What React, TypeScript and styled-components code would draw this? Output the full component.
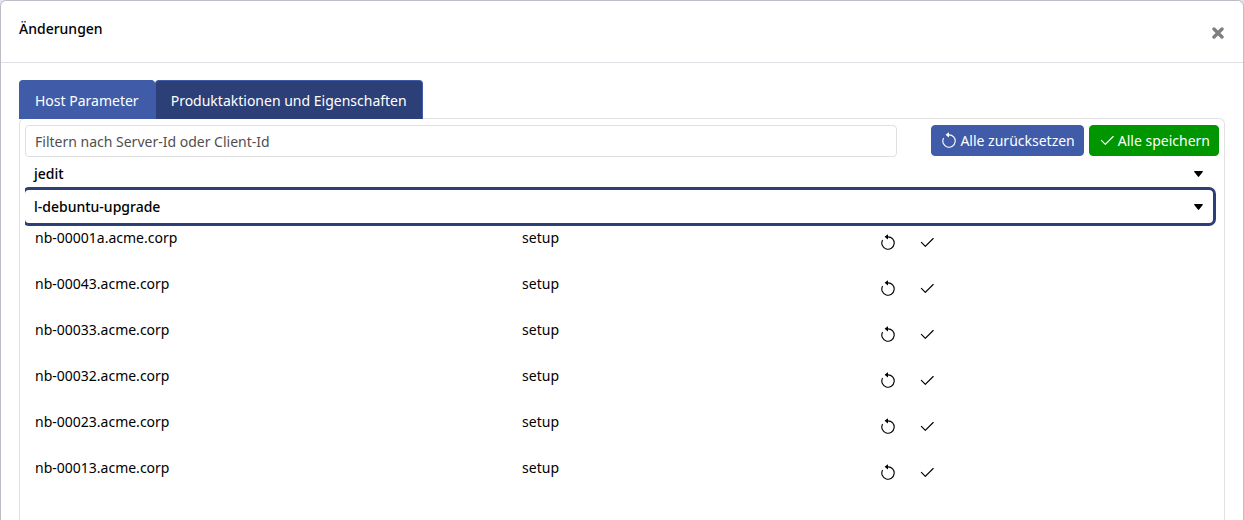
import React from "react";
import styled, { createGlobalStyle } from "styled-components";
import { BsArrowCounterclockwise, BsCheck2 } from "react-icons/bs";

const navy = "#2d3f77";
const blue = "#405ca8";

const GlobalStyle = createGlobalStyle`
  *, *::before, *::after { box-sizing: border-box; }
  body {
    margin: 0;
    background: #e6e6f0;
    color: #000;
    font: 14px/20px "Noto Sans", "Open Sans", sans-serif;
  }
  button, input { font: inherit; }
  button { cursor: pointer; }
`;

const Modal = styled.div`
  display: flex;
  flex-direction: column;
  min-height: 100vh;
  overflow: hidden;
  background: #fff;
  border: 1px solid #bdbdc5;
  border-bottom: 0;
  border-radius: 6px 6px 0 0;
`;

const ModalHeader = styled.header`
  display: flex;
  justify-content: space-between;
  align-items: flex-start;
  height: 62px;
  padding: 18px;
  border-bottom: 1px solid #dee0e6;
`;

const Title = styled.h1`
  margin: 0;
  font-size: 14px;
  font-weight: 500;
`;

const CloseButton = styled.button`
  display: flex;
  padding: 8px 1px;
  border: 0;
  background: none;
  color: #7f7f7f;
`;

const ModalBody = styled.main`
  display: flex;
  flex: 1;
  flex-direction: column;
  padding: 17px 18px 0;
`;

const TabList = styled.div`
  display: flex;
`;

const Tab = styled.button<{ $active?: boolean }>`
  position: relative;
  height: 39px;
  padding: 2px 15px 0;
  margin-bottom: -1px;
  border: 1px solid ${blue};
  border-bottom-width: 0;
  border-radius: 4px 4px 0 0;
  background: ${(p) => (p.$active ? navy : blue)};
  color: #fff;
`;

const Panel = styled.section`
  flex: 1;
  padding: 6px 5px 0;
  border: 1px solid #e2e2e2;
  border-bottom: 0;
  border-radius: 6px 6px 0 0;
`;

const Toolbar = styled.div`
  display: flex;
  align-items: flex-start;
  gap: 5px;
  margin-bottom: 1px;
`;

const FilterInput = styled.input`
  flex: 1;
  min-width: 0;
  height: 32px;
  margin-right: 29px;
  padding: 0 9px;
  border: 1px solid #dfdfe1;
  border-radius: 4px;
  background: #fff;
  color: #000;
  &::placeholder { color: #4f4f4f; opacity: 1; }
`;

const ActionButton = styled.button<{ $color: string }>`
  display: flex;
  align-items: center;
  gap: 2px;
  height: 31px;
  padding: 1px 8px 0;
  border: 1px solid ${(p) => p.$color};
  border-radius: 4px;
  background: ${(p) => p.$color};
  color: #fff;
  white-space: nowrap;
`;

const ProductList = styled.div`
  overflow: hidden;
  padding-right: 6px;
`;

const ProductHeading = styled.h2`
  margin: 0;
  font-size: 14px;
  font-weight: 500;
`;

const ProductToggle = styled.button<{ $focused?: boolean }>`
  display: flex;
  justify-content: space-between;
  align-items: center;
  width: 100%;
  height: ${(p) => (p.$focused ? 33 : 32)}px;
  padding: 0 10px 0 9px;
  border: 0;
  border-radius: 4px;
  background: none;
  color: #000;
  outline: 0;
  box-shadow: ${(p) => (p.$focused ? `0 0 0 3px ${navy}` : "none")};
`;

const ClientTable = styled.table`
  width: 100%;
  table-layout: fixed;
  border-collapse: collapse;
`;

const Cell = styled.td<{ $width: string }>`
  width: ${(p) => p.$width};
  height: 46px;
  padding: 5px 10px;
  vertical-align: top;
`;

const ActionCell = styled(Cell)`
  padding: 5px 4px;
`;

const RowActions = styled.div`
  display: flex;
  gap: 7px;
`;

const IconButton = styled.button`
  display: flex;
  justify-content: center;
  align-items: center;
  width: 32px;
  height: 30px;
  padding: 0;
  border: 0;
  background: none;
  color: #000;
`;

const Caret = () => (
  <svg width="9" height="6" viewBox="0 0 9 6" aria-hidden="true">
    <path d="M.8 0h7.4c.8 0 1 .6.5 1.1L5.1 5.6a.8.8 0 0 1-1.2 0L.3 1.1C-.2.6 0 0 .8 0z" fill="currentColor" />
  </svg>
);

const Cross = () => (
  <svg width="12" height="12" viewBox="0 0 12 12" aria-hidden="true">
    <path d="M2 2l8 8M10 2l-8 8" stroke="currentColor" strokeWidth="3.4" strokeLinecap="round" />
  </svg>
);

const clients = ["nb-00001a", "nb-00043", "nb-00033", "nb-00032", "nb-00023", "nb-00013"];

export default function App() {
  return (
    <>
      <GlobalStyle />
      <Modal role="dialog" aria-labelledby="dialog-title">
        <ModalHeader>
          <Title id="dialog-title">Änderungen</Title>
          <CloseButton type="button" aria-label="Schließen">
            <Cross />
          </CloseButton>
        </ModalHeader>
        <ModalBody>
          <TabList role="tablist">
            <Tab type="button" role="tab" aria-selected={false}>Host Parameter</Tab>
            <Tab type="button" role="tab" aria-selected $active>Produktaktionen und Eigenschaften</Tab>
          </TabList>
          <Panel role="tabpanel">
            <Toolbar>
              <FilterInput
                type="text"
                aria-label="Filtern nach Server-Id oder Client-Id"
                placeholder="Filtern nach Server-Id oder Client-Id"
              />
              <ActionButton type="button" $color={blue}>
                <BsArrowCounterclockwise size={18} />
                Alle zurücksetzen
              </ActionButton>
              <ActionButton type="button" $color="#009600">
                <BsCheck2 size={18} />
                Alle speichern
              </ActionButton>
            </Toolbar>
            <ProductList>
              <ProductHeading>
                <ProductToggle type="button" aria-expanded={false}>
                  jedit
                  <Caret />
                </ProductToggle>
              </ProductHeading>
              <ProductHeading>
                <ProductToggle type="button" aria-expanded $focused>
                  l-debuntu-upgrade
                  <Caret />
                </ProductToggle>
              </ProductHeading>
              <ClientTable>
                <tbody>
                  {clients.map((client) => (
                    <tr key={client}>
                      <Cell $width="41%">{client}.acme.corp</Cell>
                      <Cell $width="30%">setup</Cell>
                      <ActionCell $width="29%">
                        <RowActions>
                          <IconButton type="button" aria-label="Zurücksetzen">
                            <BsArrowCounterclockwise size={18} />
                          </IconButton>
                          <IconButton type="button" aria-label="Speichern">
                            <BsCheck2 size={18} />
                          </IconButton>
                        </RowActions>
                      </ActionCell>
                    </tr>
                  ))}
                </tbody>
              </ClientTable>
            </ProductList>
          </Panel>
        </ModalBody>
      </Modal>
    </>
  );
}
